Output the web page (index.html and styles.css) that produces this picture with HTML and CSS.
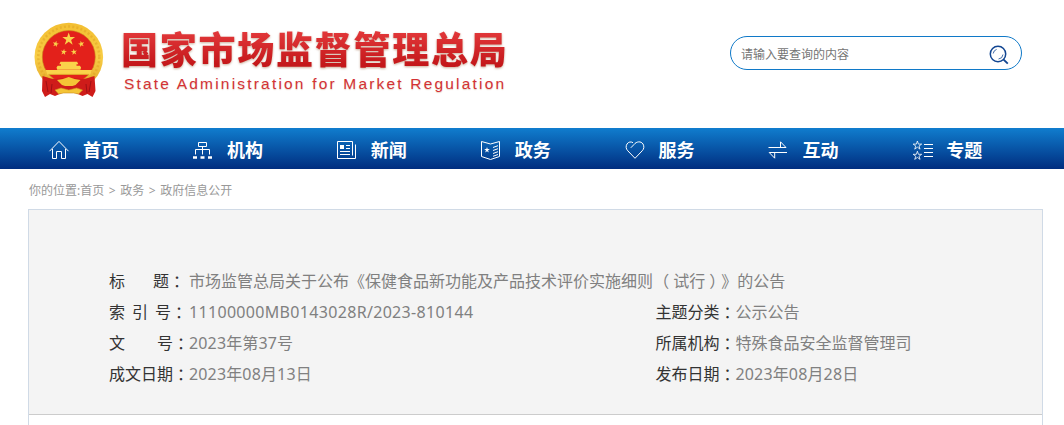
FILE: index.html
```html
<!DOCTYPE html>
<html lang="zh-CN">
<head>
  <meta charset="UTF-8">
  <meta name="viewport" content="width=device-width, initial-scale=1.0">
  <title>国家市场监督管理总局</title>
  <link rel="stylesheet" href="styles.css">
</head>
<body>
  <!-- 头部 -->
  <header class="header">
    <a class="logo" href="#">
      <svg class="emblem" viewBox="0 0 70 75">
        <defs>
          <linearGradient id="gold" x1="0" y1="0" x2="0" y2="1">
            <stop offset="0" stop-color="#f3bf32"/>
            <stop offset="0.5" stop-color="#f8cd45"/>
            <stop offset="1" stop-color="#e0a326"/>
          </linearGradient>
          <path id="star" d="M0-1 .23-.31H.95L.36.12.59.81 0 .38-.59.81-.36.12-.95-.31H-.23Z"/>
        </defs>
        <circle cx="34.8" cy="35" r="34.3" fill="url(#gold)"/>
        <circle cx="34.8" cy="35" r="30.5" fill="none" stroke="#dc9e20" stroke-width="2.5" stroke-dasharray="2 2.2" opacity=".45"/>
        <circle cx="34.8" cy="35" r="26.5" fill="#e3211b" stroke="#c98a1c" stroke-width=".6"/>
        <g fill="#fad34a">
          <use href="#star" transform="translate(34.7 17.2) scale(6.7)"/>
          <use href="#star" transform="translate(21.7 22) rotate(12) scale(3.3)"/>
          <use href="#star" transform="translate(47.3 22) rotate(-12) scale(3.3)"/>
          <use href="#star" transform="translate(29.7 30) rotate(8) scale(3.3)"/>
          <use href="#star" transform="translate(40 30) rotate(-8) scale(3.3)"/>
          <path d="M26.5 39.8h16.6l1.2 2.5H25.3ZM27 42.3h15.5V44H27ZM23.7 43.7h22.2l1.2 1.8-.7 2.3H23.2l-.7-2.3ZM11.5 48h46.6l-2 4.8H13.5Z"/>
        </g>
        <path d="M14.5 52.4h40.6" stroke="#d99b22" stroke-width=".7"/>
        <path d="M8.5 54c5 1 8 3 13 3l7-1 6 4 6-4 7 1c5 0 8-2 13-3l1 15-3 6-5-3-5 2-7-3H28l-7 3-5-2-5 3-3-6Z" fill="#cf1c1a"/>
        <path d="M12 59l2 11M18 62l-1 9M57 59l-2 11M52 62l1 9" fill="none" stroke="#a01015" stroke-width="1"/>
        <path d="M23 58l6-1 5.7-2 5.8 2 6 1-5 5-3 1h-7.5l-3-1Z" fill="#f4c436"/>
        <path d="M21 68l6-2 7.8 2 7.800-2 6 2-4 4-5-1h-10l-5 1Z" fill="#f4c436" stroke="#cf8f20" stroke-width=".6"/>
      </svg>
      <span class="logo-text">
        <span class="logo-cn">国家市场监督管理总局</span>
        <span class="logo-en">State Administration for Market Regulation</span>
      </span>
    </a>
    <form class="search">
      <input class="search-input" type="text" placeholder="请输入要查询的内容">
      <button class="search-btn" type="button" aria-label="搜索">
        <svg viewBox="0 0 20 20">
          <circle cx="9" cy="9" r="7.700" stroke-width="1.5"/>
          <path d="M14.600 14.600l4.200 4" stroke-width="1.900"/>
          <path d="M4.200 8.500a5 5 0 0 1 3.400-4.100M14 9.500a5 5 0 0 1-4.500 4.500" stroke-width=".8"/>
        </svg>
      </button>
    </form>
  </header>

  <!-- 导航 -->
  <nav class="nav">
    <a class="nav-item" href="#">
      <svg viewBox="0 0 21 20"><path d="M.5 11.2 10 1.4l9.5 9.8M3.5 9v9.5h4v-7h5v7h4V9"/></svg>
      首页
    </a>
    <a class="nav-item" href="#">
      <svg viewBox="0 0 21 20"><path d="M5.5 2.5h8v4h-8ZM9.5 6.5v8M2.5 14.5v-5h14v5"/><path d="M0 17.5h4M7.5 17.5h4M15 17.5h4" stroke-width="2.4"/></svg>
      机构
    </a>
    <a class="nav-item" href="#">
      <svg viewBox="0 0 21 20"><path d="M15.5 15.5v-14h-15v17h18v-14M9 5.5h4M9 8.5h4M3 11.5h10M3 14.5h10"/><path class="fill" d="M3 5h4v4H3Z"/></svg>
      新闻
    </a>
    <a class="nav-item" href="#">
      <svg viewBox="0 0 21 20"><path d="M.5 1.5 9.5 4l9-2.5v15l-9 3-9-3ZM12 7.5l5-1.8M12 10.5l5-1.8M12 13.5l5-1.8M12 16.3l5-1.8"/><use class="fill" href="#star" transform="translate(6 10) scale(3)"/></svg>
      政务
    </a>
    <a class="nav-item" href="#">
      <svg viewBox="0 0 21 20"><path d="M5.8 7.8 9 4.5C11.5 1.3 16 .9 18 4c1.4 2.4 1 5-.8 6.8L10 18.3l-7.200-7.500C.9 8.900.6 6.200 2 4c1.400-2.200 4.100-2.600 6-1.300"/></svg>
      服务
    </a>
    <a class="nav-item" href="#">
      <svg viewBox="0 0 21 20"><path d="M.5 7.500h17.500L12.500 1.800v5.700M19 12.500H1.200l5.500 5.700v-5.700"/></svg>
      互动
    </a>
    <a class="nav-item" href="#">
      <svg viewBox="0 0 21 20"><g class="thin"><use href="#star" transform="translate(5.400 5.500) scale(4.500)"/><use href="#star" transform="translate(5.400 15.700) scale(4.500)"/></g><path d="M12 4.500h9M12 8.500h9M12 12.500h9M12 16.500h9"/></svg>
      专题
    </a>
  </nav>

  <!-- 当前位置 -->
  <div class="crumbs">
    <span>你的位置:<a href="#">首页</a></span><i>&gt;</i><a href="#">政务</a><i>&gt;</i><a href="#">政府信息公开</a>
  </div>

  <!-- 公开信息 -->
  <main class="content">
    <dl class="info">
      <div class="row wide">
        <dt class="label"><span class="name two">标<b></b>题</span><span class="mid">：</span></dt>
        <dd class="title">市场监管总局关于公布《保健食品新功能及产品技术评价实施细则 <span class="open">（</span>试行<span class="close">）</span>》的公告</dd>
      </div>
      <div class="row">
        <dt class="label"><span class="name three">索<b></b>引<b></b>号</span><span class="mid">：</span></dt>
        <dd class="index-no">11100000MB0143028R/2023-810144</dd>
      </div>
      <div class="row">
        <dt class="label"><span class="name">主题分类</span><span class="mid">：</span></dt>
        <dd>公示公告</dd>
      </div>
      <div class="row">
        <dt class="label"><span class="name">文<b></b>号</span><span class="mid">：</span></dt>
        <dd class="date">2023年第37号</dd>
      </div>
      <div class="row">
        <dt class="label"><span class="name">所属机构</span><span class="mid">：</span></dt>
        <dd>特殊食品安全监督管理司</dd>
      </div>
      <div class="row">
        <dt class="label"><span class="name">成文日期</span><span class="mid">：</span></dt>
        <dd class="date">2023年08月13日</dd>
      </div>
      <div class="row">
        <dt class="label"><span class="name">发布日期</span><span class="mid">：</span></dt>
        <dd class="date">2023年08月28日</dd>
      </div>
    </dl>
  </main>
</body>
</html>
```

FILE: styles.css
```css
* {
  box-sizing: border-box;
  margin: 0;
  padding: 0;
}
body {
  display: flex;
  flex-direction: column;
  height: 100vh;
  overflow: hidden;
  background: #fff;
  font-family: "Noto Sans", "Noto Sans CJK SC", sans-serif;
  text-spacing-trim: space-all;
}
a {
  color: inherit;
  text-decoration: none;
}
/* 头部 */
.header {
  display: flex;
  flex-shrink: 0;
  justify-content: space-between;
  align-items: flex-start;
  height: 128px;
  padding: 22px 42px 0 34px;
}
.logo {
  display: flex;
}
.emblem {
  width: 70px;
  height: 75px;
}
.logo-text {
  display: flex;
  flex-direction: column;
  padding: 2px 0 0 17px;
  white-space: nowrap;
}
.logo-cn {
  font: 900 37px/48px "Noto Sans CJK SC", sans-serif;
  letter-spacing: 1.75px;
  color: transparent;
  background: linear-gradient(#e2383a 15%, #c4171a 85%);
  -webkit-background-clip: text;
  background-clip: text;
  filter: drop-shadow(0 1px 1px rgba(150, 90, 50, 0.5));
}
.logo-en {
  padding-left: 3px;
  font: 15.5px/23px "Liberation Sans", Arial, sans-serif;
  letter-spacing: 2.19px;
  color: #d43235;
  text-shadow: 0 1px 1px rgba(170, 110, 60, 0.3);
}
.search {
  display: flex;
  align-items: center;
  width: 292px;
  height: 34px;
  margin-top: 14px;
  padding: 0 12px 0 10px;
  border: 1px solid #1079c8;
  border-radius: 17px;
}
.search-input {
  flex: 1;
  height: 30px;
  border: none;
  outline: none;
  background: none;
  font: 12px "Noto Sans CJK SC", sans-serif;
}
.search-input::placeholder {
  color: #757575;
}
.search-btn {
  width: 20px;
  height: 20px;
  margin-top: 4px;
  border: none;
  background: none;
}
.search-btn svg {
  display: block;
  width: 20px;
  height: 20px;
  fill: none;
  stroke: #124692;
}
/* 导航 */
.nav {
  display: flex;
  flex-shrink: 0;
  height: 41px;
  padding-left: 49px;
  background: linear-gradient(#107dce, #002d7f);
}
.nav-item {
  display: flex;
  align-items: center;
  gap: 13px;
  width: 143.9px;
  padding-top: 2px;
  color: #fff;
  font: bold 18px/39px "Noto Sans CJK SC", sans-serif;
}
.nav-item svg {
  width: 21px;
  height: 20px;
  overflow: visible;
  fill: none;
  stroke: #fff;
  stroke-width: 1;
}
.nav-item .fill {
  fill: #fff;
  stroke: none;
}
.nav-item .thin {
  stroke-width: 0.18;
}
/* 当前位置 */
.crumbs {
  display: flex;
  flex-shrink: 0;
  height: 40px;
  padding: 1px 0 0 29px;
  font-size: 12px;
  line-height: 41px;
  color: #999;
}
.crumbs i {
  width: 16px;
  font-style: normal;
  text-align: center;
}
/* 公开信息 */
.content {
  flex: 1;
  width: 1015px;
  margin-left: 28px;
  border: 1px solid #d0dae6;
  border-bottom: none;
}
.info {
  display: grid;
  grid-template-columns: 546.5px 1fr;
  grid-auto-rows: 31px;
  height: 205px;
  padding: 56px 0 0 80px;
  background: #f4f4f4;
  border-bottom: 1px solid #ccc;
  font-size: 16px;
  line-height: 31px;
  white-space: nowrap;
}
.row {
  display: flex;
}
.wide {
  grid-column: 1 / 3;
}
.label {
  display: flex;
  width: 80px;
  color: #333;
}
.name {
  display: flex;
  width: 64px;
}
.name b {
  flex: 1;
}
.name.two {
  width: 60px;
}
.name.three {
  width: 62px;
}
.row dd {
  color: #808080;
}
.row .index-no {
  letter-spacing: 0.32px;
}
.row .date {
  letter-spacing: 0.15px;
}
.mid {
  font-family: "Noto Sans CJK TC", sans-serif;
}
/* 括号居中 */
.open {
  margin: 0 4px 0 -4px;
}
.close {
  margin: 0 -4px 0 4px;
}
```
